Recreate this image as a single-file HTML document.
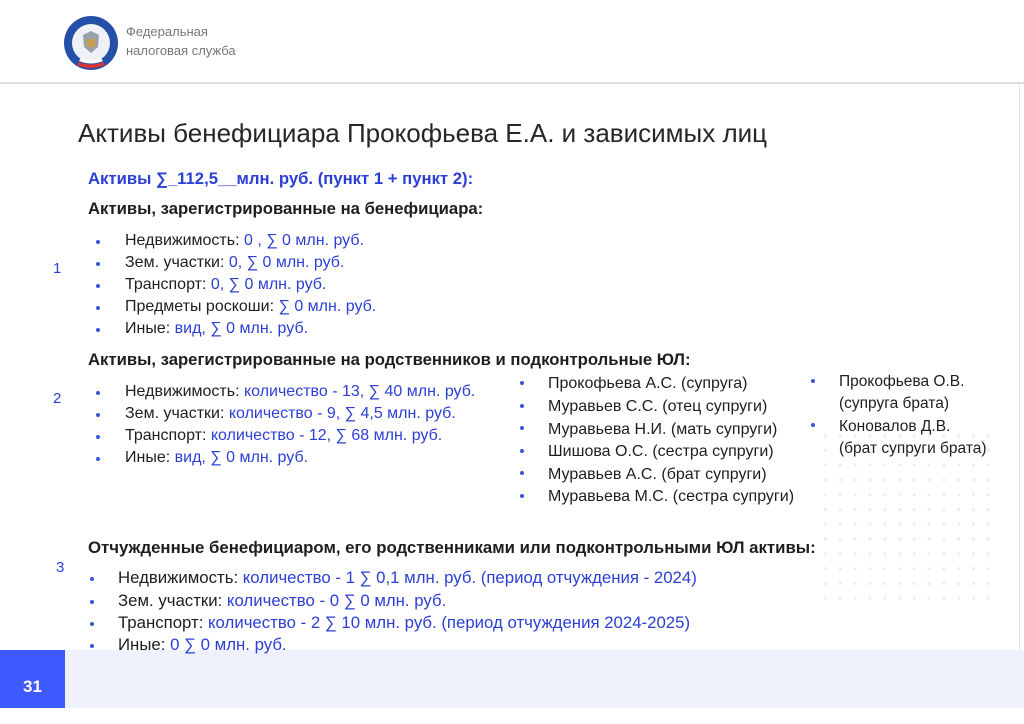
<!DOCTYPE html>
<html><head><meta charset="utf-8"><style>
*{margin:0;padding:0}
body{width:1024px;height:708px;position:relative;overflow:hidden;background:#fff;font-family:"Liberation Sans",sans-serif;color:#1e1e1e}
.a{position:absolute;white-space:nowrap;line-height:22px;font-size:16px}
.b{color:#2b3fd4}
.dot{position:absolute;width:4px;height:4px;border-radius:50%;background:#3b55d9}
.bold{font-weight:bold;font-size:16.7px}
.m{font-size:15.5px}
.m2{font-size:16px}
.s{font-size:16.8px}
</style></head><body>
<div style="position:absolute;left:0;top:0;width:1024px;height:82px;border-bottom:2px solid #ddd"></div>
<div style="position:absolute;right:4px;top:84px;width:1px;height:566px;background:#e4e4e4"></div>
<svg style="position:absolute;left:63px;top:15px" width="56" height="56" viewBox="0 0 56 56">
<circle cx="28" cy="28" r="27" fill="#2550a8"/>
<circle cx="28" cy="28" r="19" fill="#eef1f6"/>
<path d="M14 50 Q28 56 42 50 L40 47 Q28 52 16 47Z" fill="#d33"/>
<path d="M16 46 Q28 51 40 46 L38 43 Q28 48 18 43Z" fill="#fff"/>
<path d="M20 20 L28 16 L36 20 L35 32 L28 38 L21 32Z" fill="#9aa0a8"/>
<rect x="24" y="24" width="8" height="8" fill="#c9a14a"/>
</svg>
<div class="a" style="left:126px;top:22px;font-size:13px;color:#777;line-height:19px">Федеральная<br>налоговая служба</div>
<div class="a" style="left:78px;top:117px;font-size:26px;line-height:32px;color:#262626">Активы бенефициара Прокофьева Е.А. и зависимых лиц</div>
<div class="a b bold" style="left:88px;top:168px">Активы ∑_112,5__млн. руб. (пункт 1 + пункт 2):</div>
<div class="a bold" style="left:88px;top:198px">Активы, зарегистрированные на бенефициара:</div>
<div class="a b" style="left:53px;top:258px;font-size:15px">1</div>
<div class="dot" style="left:96px;top:240px"></div><div class="a" style="left:125px;top:230px">Недвижимость: <span class="b">0 , ∑ 0 млн. руб.</span></div>
<div class="dot" style="left:96px;top:262px"></div><div class="a" style="left:125px;top:252px">Зем. участки: <span class="b">0, ∑ 0 млн. руб.</span></div>
<div class="dot" style="left:96px;top:284px"></div><div class="a" style="left:125px;top:274px">Транспорт: <span class="b">0, ∑ 0 млн. руб.</span></div>
<div class="dot" style="left:96px;top:306px"></div><div class="a" style="left:125px;top:296px">Предметы роскоши: <span class="b">∑ 0 млн. руб.</span></div>
<div class="dot" style="left:96px;top:328px"></div><div class="a" style="left:125px;top:318px">Иные: <span class="b">вид, ∑ 0 млн. руб.</span></div>
<div class="a bold" style="left:88px;top:349px">Активы, зарегистрированные на родственников и подконтрольные ЮЛ:</div>
<div class="a b" style="left:53px;top:388px;font-size:15px">2</div>
<div class="dot" style="left:96px;top:391px"></div><div class="a" style="left:125px;top:381px">Недвижимость: <span class="b">количество - 13, ∑ 40 млн. руб.</span></div>
<div class="dot" style="left:96px;top:413px"></div><div class="a" style="left:125px;top:403px">Зем. участки: <span class="b">количество - 9, ∑ 4,5 млн. руб.</span></div>
<div class="dot" style="left:96px;top:435px"></div><div class="a" style="left:125px;top:425px">Транспорт: <span class="b">количество - 12, ∑ 68 млн. руб.</span></div>
<div class="dot" style="left:96px;top:457px"></div><div class="a" style="left:125px;top:447px">Иные: <span class="b">вид, ∑ 0 млн. руб.</span></div>
<div class="dot" style="left:520px;top:381px"></div><div class="a m2" style="left:548px;top:373px">Прокофьева А.С. (супруга)</div>
<div class="dot" style="left:520px;top:404px"></div><div class="a m2" style="left:548px;top:396px">Муравьев С.С. (отец супруги)</div>
<div class="dot" style="left:520px;top:426px"></div><div class="a m2" style="left:548px;top:419px">Муравьева Н.И. (мать супруги)</div>
<div class="dot" style="left:520px;top:449px"></div><div class="a m2" style="left:548px;top:441px">Шишова О.С. (сестра супруги)</div>
<div class="dot" style="left:520px;top:471px"></div><div class="a m2" style="left:548px;top:464px">Муравьев А.С. (брат супруги)</div>
<div class="dot" style="left:520px;top:494px"></div><div class="a m2" style="left:548px;top:486px">Муравьева М.С. (сестра супруги)</div>
<svg style="position:absolute;left:820px;top:430px" width="180" height="175">
<defs><pattern id="p" width="14.8" height="14.8" patternUnits="userSpaceOnUse"><rect x="4" y="4" width="3" height="3" fill="#eceef6"/></pattern></defs>
<rect width="180" height="175" fill="url(#p)"/></svg>
<div class="dot" style="left:811px;top:379px"></div>
<div class="a m" style="left:839px;top:371px">Прокофьева О.В.<br>(супруга брата)</div>
<div class="dot" style="left:811px;top:423px"></div>
<div class="a m" style="left:839px;top:416px">Коновалов Д.В.<br>(брат супруги брата)</div>
<div class="a bold" style="left:88px;top:537px;font-size:16.8px">Отчужденные бенефициаром, его родственниками или подконтрольными ЮЛ активы:</div>
<div class="a b" style="left:56px;top:557px;font-size:15px">3</div>
<div class="dot" style="left:90px;top:577px"></div><div class="a s" style="left:118px;top:567px">Недвижимость: <span class="b">количество - 1 ∑ 0,1 млн. руб. (период отчуждения - 2024)</span></div>
<div class="dot" style="left:90px;top:600px"></div><div class="a s" style="left:118px;top:590px">Зем. участки: <span class="b">количество - 0 ∑ 0 млн. руб.</span></div>
<div class="dot" style="left:90px;top:622px"></div><div class="a s" style="left:118px;top:612px">Транспорт: <span class="b">количество - 2 ∑ 10 млн. руб. (период отчуждения 2024-2025)</span></div>
<div style="position:absolute;left:0;top:650px;width:1024px;height:58px;background:#eff2fc"></div>
<div class="dot" style="left:90px;top:644px"></div><div class="a s" style="left:118px;top:634px">Иные: <span class="b">0 ∑ 0 млн. руб.</span></div>
<div style="position:absolute;left:0;top:650px;width:65px;height:58px;background:#3d5afe;color:#fff;font-weight:bold;font-size:17px;line-height:74px;text-align:center">31</div>
</body></html>
